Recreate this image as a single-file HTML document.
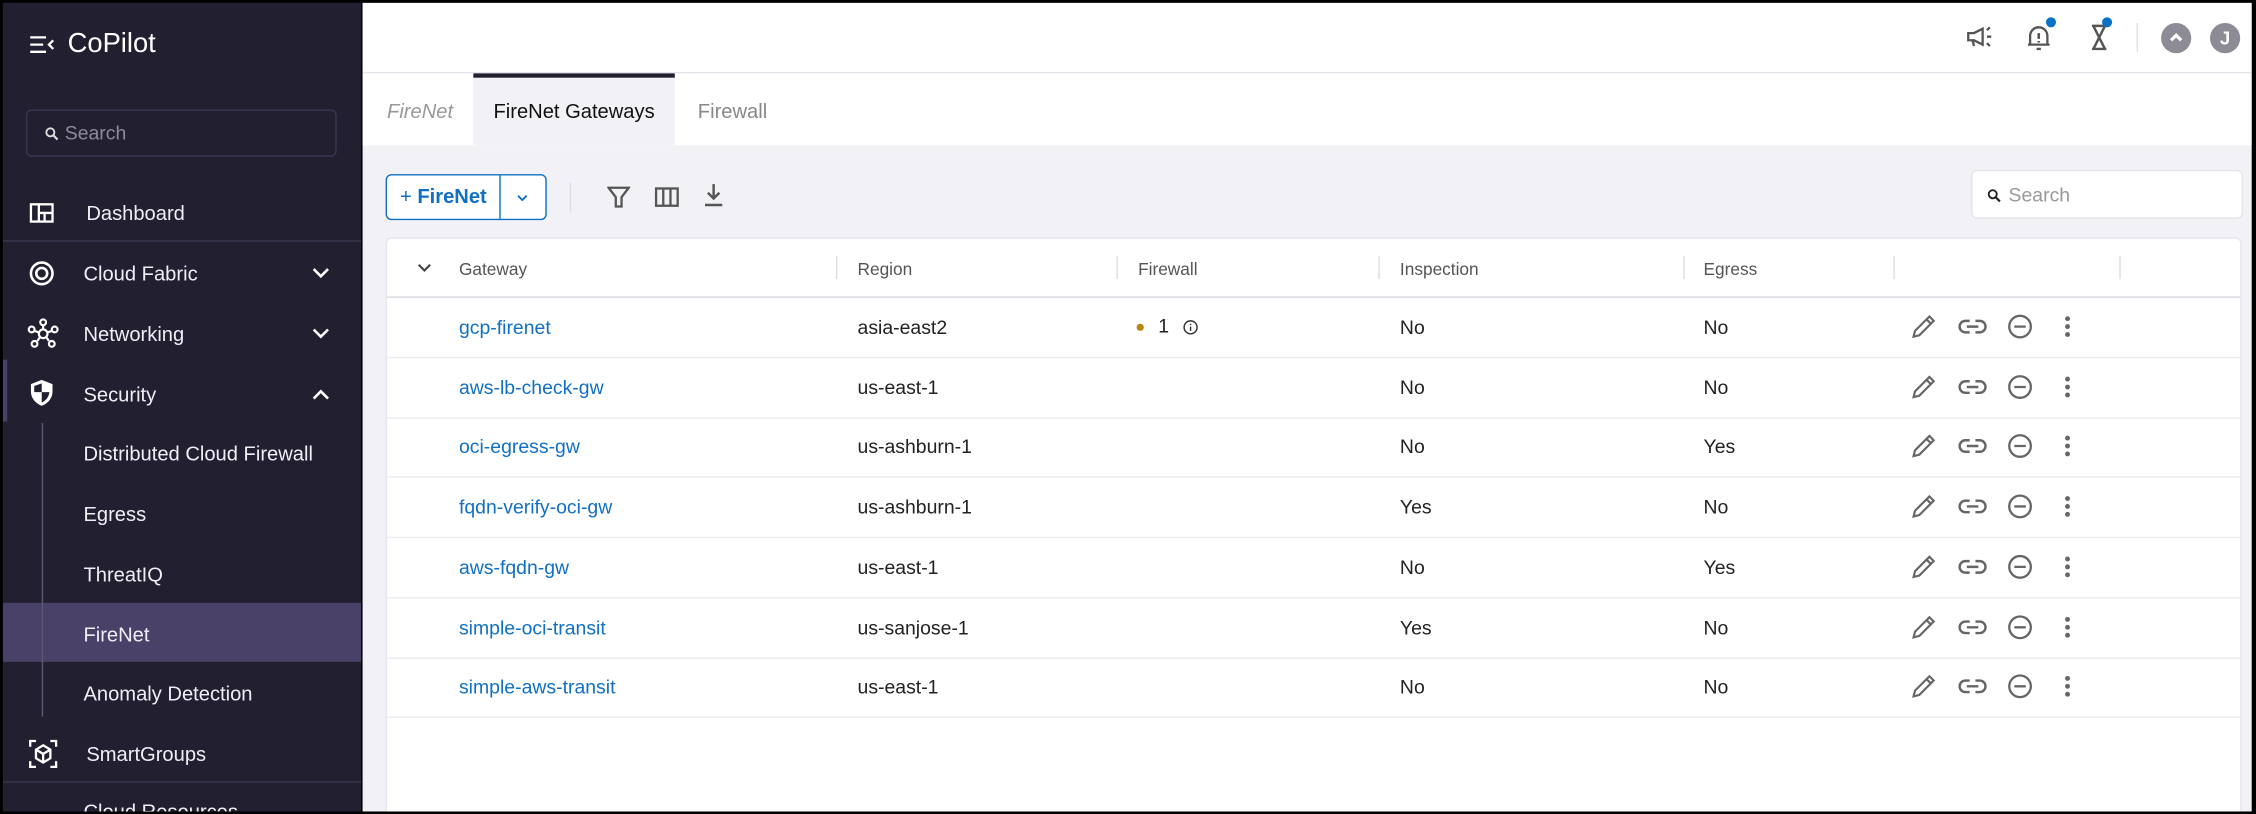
<!DOCTYPE html>
<html><head><meta charset="utf-8"><style>
*{box-sizing:border-box;margin:0;padding:0}
html,body{width:2256px;height:814px;overflow:hidden;background:#000}
#w{position:absolute;left:0;top:0;width:1568px;height:566px;transform:scale(1.43878);transform-origin:0 0;font-family:"Liberation Sans",sans-serif;background:#000}
.sb{position:absolute;left:2px;top:2px;width:249px;height:562px;background:#221f30;color:#fff;overflow:hidden}
.sb .it{position:absolute;left:0;width:249px;font-size:14px;color:#f0eef5}
.ic{position:absolute;left:18px}
.main{position:absolute;left:252px;top:2px;width:1313px;height:562px;background:#f2f2f6;overflow:hidden}
.top{position:absolute;left:0;top:0;width:100%;height:49px;background:#fff;border-bottom:1px solid #e4e4ea}
.tabs{position:absolute;left:0;top:49px;width:100%;height:50px;background:#fff}
.tab{position:absolute;top:0;height:50px;line-height:52px;font-size:14px}
.card{position:absolute;left:16px;top:163px;width:1290px;height:410px;background:#fff;border:1px solid #e6e6ec;border-radius:4px}
.hd{position:absolute;top:0;left:0;width:100%;height:41px;border-bottom:1px solid #d6d6de;font-size:12px;color:#555}
.hd span{position:absolute;top:14px}
.sep{position:absolute;top:12px;width:1px;height:16px;background:#dedee4}
.row{position:absolute;left:0;width:100%;height:42px;border-bottom:1px solid #ebebf0;font-size:13.5px;color:#222}
.row span{position:absolute;top:13px}
.row a{position:absolute;top:13px;left:50px;color:#1170c4;text-decoration:none}
.act{position:absolute;top:11px}
</style></head><body><div id="w">
<div class="sb">
 <svg class="ic" style="left:18px;top:22px" width="18" height="14" viewBox="0 0 18 14"><path d="M1 2h11M1 7h9M1 12h11M17 4l-3 3 3 3" stroke="#fff" stroke-width="1.6" fill="none"/></svg>
 <div style="position:absolute;left:45px;top:18px;font-size:19px">CoPilot</div>
 <div style="position:absolute;left:16px;top:74px;width:216px;height:33px;border:1px solid #3a3650;border-radius:4px">
  <svg style="position:absolute;left:12px;top:11px" width="10" height="10" viewBox="0 0 10 10"><circle cx="4" cy="4" r="2.8" stroke="#ddd" stroke-width="1.3" fill="none"/><path d="M6 6l3 3" stroke="#ddd" stroke-width="1.5"/></svg>
  <span style="position:absolute;left:26px;top:8px;font-size:13.5px;color:#8d8a9c">Search</span></div>
 <svg class="ic" style="top:138px" width="18" height="16" viewBox="0 0 18 16"><rect x="1.5" y="2" width="15" height="12" fill="none" stroke="#fff" stroke-width="1.6"/><path d="M7 2v12M7 8h9.5M11 8v6" stroke="#fff" stroke-width="1.6"/></svg>
 <div class="it" style="top:138px;left:58px">Dashboard</div>
 <div style="position:absolute;left:0;top:165px;width:249px;height:1px;background:#3a3650"></div>
 <svg class="ic" style="top:179px" width="18" height="18" viewBox="0 0 18 18"><circle cx="9" cy="9" r="7.5" stroke="#fff" stroke-width="1.8" fill="none"/><circle cx="9" cy="9" r="3.8" stroke="#fff" stroke-width="1.8" fill="none"/></svg>
 <div class="it" style="top:180px;left:56px">Cloud Fabric</div>
 <svg style="position:absolute;left:215px;top:184px" width="12" height="8"><path d="M1 1l5 5 5-5" stroke="#fff" stroke-width="1.8" fill="none"/></svg>
 <svg class="ic" style="top:219px;left:17px" width="22" height="22" viewBox="0 0 22 22" fill="none" stroke="#fff" stroke-width="1.5"><circle cx="11" cy="11" r="3"/><circle cx="11" cy="3" r="2"/><circle cx="3" cy="8" r="2"/><circle cx="19" cy="8" r="2"/><circle cx="5" cy="18" r="2"/><circle cx="17" cy="18" r="2"/><path d="M11 5v3M5 9l3 1M17 9l-3 1M7 16l2-3M15 16l-2-3"/></svg>
 <div class="it" style="top:222px;left:56px">Networking</div>
 <svg style="position:absolute;left:215px;top:226px" width="12" height="8"><path d="M1 1l5 5 5-5" stroke="#fff" stroke-width="1.8" fill="none"/></svg>
 <div style="position:absolute;left:0;top:248px;width:3px;height:43px;background:#4a4169"></div>
 <svg class="ic" style="top:261px" width="18" height="20" viewBox="0 0 18 20"><path d="M9 1l7.5 3v5c0 5-3.5 8.5-7.5 10C5 17.5 1.5 14 1.5 9V4z" fill="#fff"/><path d="M9 3.5v6H3.8V5.3zM9 9.5h5.3c-.4 3.5-2.5 6-5.3 7.3z" fill="#221f30"/></svg>
 <div class="it" style="top:264px;left:56px">Security</div>
 <svg style="position:absolute;left:215px;top:268px" width="12" height="8"><path d="M1 7l5-5 5 5" stroke="#fff" stroke-width="1.8" fill="none"/></svg>
 <div style="position:absolute;left:0;top:417px;width:249px;height:41px;background:#4a4169"></div>
 <div style="position:absolute;left:27px;top:292px;width:1px;height:204px;background:#5c586c"></div>
 <div class="it" style="top:305px;left:56px">Distributed Cloud Firewall</div>
 <div class="it" style="top:347px;left:56px">Egress</div>
 <div class="it" style="top:389px;left:56px">ThreatIQ</div>
 <div class="it" style="top:431px;left:56px">FireNet</div>
 <div class="it" style="top:472px;left:56px">Anomaly Detection</div>
 <svg class="ic" style="top:511px;left:17px" width="22" height="22" viewBox="0 0 22 22" fill="none" stroke="#fff" stroke-width="1.6"><path d="M2 6V2h4M16 2h4v4M20 16v4h-4M6 20H2v-4"/><path d="M11 5l5 3v6l-5 3-5-3V8zM6 8l5 3 5-3M11 11v6"/></svg>
 <div class="it" style="top:514px;left:58px">SmartGroups</div>
 <div style="position:absolute;left:0;top:541px;width:249px;height:1px;background:#3a3650"></div>
 <div class="it" style="top:554px;left:56px">Cloud Resources</div>
</div>
<div class="main">
 <div class="top">
  <svg style="position:absolute;left:1114px;top:16px" width="20" height="16" viewBox="0 0 20 16" fill="none" stroke="#555" stroke-width="1.6"><path d="M2 5h4l6-3v11L6 10H2zM5 10l1 4M15 3l2-2M15 7.5h3M15 12l2 2"/></svg>
  <svg style="position:absolute;left:1156px;top:14px" width="18" height="20" viewBox="0 0 18 20" fill="none" stroke="#555" stroke-width="1.6"><path d="M3 15V9a6 6 0 0112 0v6zM1.5 15h15M7.5 18h3"/><path d="M9 7v4M9 12.5v1" stroke-width="1.8"/></svg>
  <div style="position:absolute;left:1170px;top:10px;width:7px;height:7px;border-radius:50%;background:#0a72c6"></div>
  <svg style="position:absolute;left:1200px;top:14px" width="14" height="20" viewBox="0 0 14 20" fill="none" stroke="#555" stroke-width="1.7"><path d="M2 2h10M2 18h10M3 2l8 16M11 2L3 18"/></svg>
  <div style="position:absolute;left:1209px;top:10px;width:7px;height:7px;border-radius:50%;background:#0a72c6"></div>
  <div style="position:absolute;left:1233px;top:14px;width:1px;height:20px;background:#e0e0e6"></div>
  <div style="position:absolute;left:1250px;top:14px;width:21px;height:21px;border-radius:50%;background:#8d8b96"><svg width="21" height="21"><path d="M7 12l3.5-3.5L14 12" stroke="#fff" stroke-width="2.2" fill="none"/></svg></div>
  <div style="position:absolute;left:1284px;top:14px;width:21px;height:21px;border-radius:50%;background:#8d8b96;color:#fff;font-size:13px;font-weight:bold;text-align:center;line-height:21px">J</div>
 </div>
 <div class="tabs">
  <div class="tab" style="left:17px;color:#999;font-style:italic">FireNet</div>
  <div class="tab" style="left:77px;width:140px;background:#f2f2f6;border-top:3px solid #221f30;line-height:47px;text-align:center;color:#111">FireNet Gateways</div>
  <div class="tab" style="left:233px;color:#888">Firewall</div>
 </div>
 <div style="position:absolute;left:16px;top:119px;width:112px;height:32px;border:1px solid #1170c4;border-radius:4px;background:#fff;color:#1170c4;font-size:14px">
  <span style="position:absolute;left:9px;top:6px">+ <b style="font-weight:600">FireNet</b></span>
  <div style="position:absolute;left:78px;top:0;width:1px;height:30px;background:#1170c4"></div>
  <svg style="position:absolute;left:90px;top:13px" width="8" height="5"><path d="M1 1l3 3 3-3" stroke="#1170c4" stroke-width="1.3" fill="none"/></svg>
 </div>
 <div style="position:absolute;left:144px;top:125px;width:1px;height:20px;background:#dcdce2"></div>
 <svg style="position:absolute;left:170px;top:127px" width="16" height="16" viewBox="0 0 16 16"><path d="M1 1.5h14L10 8v6.5H6V8z" fill="none" stroke="#555" stroke-width="1.6"/></svg>
 <svg style="position:absolute;left:203px;top:128px" width="17" height="14" viewBox="0 0 17 14" fill="none" stroke="#555" stroke-width="1.6"><rect x="1" y="1" width="15" height="12"/><path d="M6 1v12M11 1v12"/></svg>
 <svg style="position:absolute;left:237px;top:125px" width="14" height="17" viewBox="0 0 14 17" fill="none" stroke="#555" stroke-width="1.7"><path d="M7 1v10M3 7l4 4 4-4M1 15.5h12"/></svg>
 <div style="position:absolute;left:1118px;top:116px;width:189px;height:34px;background:#fff;border:1px solid #e4e4ea;border-radius:4px">
  <svg style="position:absolute;left:10px;top:12px" width="10" height="10" viewBox="0 0 10 10"><circle cx="4" cy="4" r="2.8" stroke="#222" stroke-width="1.3" fill="none"/><path d="M6 6l3 3" stroke="#222" stroke-width="1.5"/></svg>
  <span style="position:absolute;left:25px;top:9px;font-size:13.5px;color:#999">Search</span></div>
 <div class="card">
  <div class="hd">
   <svg style="position:absolute;left:21px;top:17px" width="10" height="7"><path d="M1 1l4 4 4-4" stroke="#444" stroke-width="1.5" fill="none"/></svg>
   <span style="left:50px">Gateway</span><div class="sep" style="left:312px"></div>
   <span style="left:327px">Region</span><div class="sep" style="left:507px"></div>
   <span style="left:522px">Firewall</span><div class="sep" style="left:689px"></div>
   <span style="left:704px">Inspection</span><div class="sep" style="left:901px"></div>
   <span style="left:915px">Egress</span><div class="sep" style="left:1047px"></div>
   <div class="sep" style="left:1204px"></div>
  </div>
  <div id="rows"></div>
 </div>
</div>
</div>
<script>
var d=[["gcp-firenet","asia-east2",1,"No","No"],["aws-lb-check-gw","us-east-1",0,"No","No"],["oci-egress-gw","us-ashburn-1",0,"No","Yes"],["fqdn-verify-oci-gw","us-ashburn-1",0,"Yes","No"],["aws-fqdn-gw","us-east-1",0,"No","Yes"],["simple-oci-transit","us-sanjose-1",0,"Yes","No"],["simple-aws-transit","us-east-1",0,"No","No"]];
var h="";
var ic='<svg class="act" style="left:1059px" width="18" height="18" viewBox="0 0 18 18" fill="none" stroke="#666" stroke-width="1.5"><path d="M2 16l1-4L13 2l3 3L6 15zM11 4l3 3"/></svg>'+
'<svg class="act" style="left:1092px;top:12px" width="20" height="16" viewBox="0 0 20 16" fill="none" stroke="#666" stroke-width="1.7"><path d="M8 4H5a4 4 0 000 8h3M12 4h3a4 4 0 010 8h-3M6 8h8"/></svg>'+
'<svg class="act" style="left:1126px" width="18" height="18" viewBox="0 0 18 18" fill="none" stroke="#666" stroke-width="1.6"><circle cx="9" cy="9" r="7.5"/><path d="M5 9h8"/></svg>'+
'<svg class="act" style="left:1165px" width="6" height="18" viewBox="0 0 6 18" fill="#666"><circle cx="3" cy="3.5" r="1.7"/><circle cx="3" cy="9" r="1.7"/><circle cx="3" cy="14.5" r="1.7"/></svg>';
d.forEach(function(r,i){h+='<div class="row" style="top:'+(41+i*41.7)+'px"><a>'+r[0]+'</a><span style="left:327px">'+r[1]+'</span>'+(r[2]?'<span style="left:521px;top:12px"><span style="position:absolute;left:0;top:6px;width:5px;height:5px;border-radius:50%;background:#b8860b"></span><span style="position:absolute;left:15px;top:0">1</span><svg style="position:absolute;left:32px;top:3px" width="11" height="11" viewBox="0 0 11 11" fill="none" stroke="#333" stroke-width="1"><circle cx="5.5" cy="5.5" r="4.5"/><path d="M5.5 5v3M5.5 3v1"/></svg></span>':'')+'<span style="left:704px">'+r[3]+'</span><span style="left:915px">'+r[4]+'</span>'+ic+'</div>'});
document.getElementById("rows").innerHTML=h;
</script>
</body></html>
